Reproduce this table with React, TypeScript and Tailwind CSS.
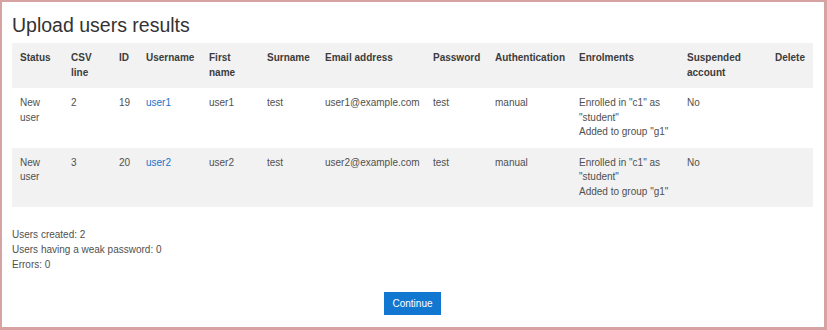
const columns = [
  { label: "Status", width: "w-[51px]" },
  { label: "CSV line", width: "w-[48px]" },
  { label: "ID", width: "w-[27px]" },
  { label: "Username", width: "w-[63px]" },
  { label: "First name", width: "w-[58px]" },
  { label: "Surname", width: "w-[58px]" },
  { label: "Email address", width: "w-[108px]" },
  { label: "Password", width: "w-[62px]" },
  { label: "Authentication", width: "w-[84px]" },
  { label: "Enrolments", width: "w-[108px]" },
  { label: "Suspended account", width: "w-[88px]" },
  { label: "Delete", width: "w-[46px]" },
];

const rows = [
  { line: "2", id: "19", username: "user1", email: "user1@example.com" },
  { line: "3", id: "20", username: "user2", email: "user2@example.com" },
];

function Cell({ children }: { children?: React.ReactNode }) {
  return <td className="px-2 py-2 align-top">{children}</td>;
}

export default function App() {
  return (
    <div className="h-[330px] w-[827px] border-t-2 border-l-2 border-r-[3px] border-b-[3px] border-[#d6a2a2] bg-white pl-[10px] pr-[11px] pt-[11px] font-['Liberation_Sans',Arial,sans-serif] text-[10px] leading-[14.5px] text-[#505050]">
      <h2 className="text-[19.5px] leading-[24px] font-normal text-[#333]">Upload users results</h2>

      <table className="mt-[6px] w-[801px] table-fixed border-collapse text-left">
        <colgroup>
          {columns.map((c) => (
            <col key={c.label} className={c.width} />
          ))}
        </colgroup>
        <thead>
          <tr className="bg-[#f2f2f2]">
            {columns.map((c) => (
              <th key={c.label} className="px-2 py-2 align-top font-bold text-[#3c3c3c]">
                {c.label}
              </th>
            ))}
          </tr>
        </thead>
        <tbody>
          {rows.map((r, i) => (
            <tr key={r.id} className={i % 2 === 1 ? "bg-[#f2f2f2]" : "bg-white"}>
              <Cell>New user</Cell>
              <Cell>{r.line}</Cell>
              <Cell>{r.id}</Cell>
              <Cell>
                <a href="#" className="text-[#1a74c9]">
                  {r.username}
                </a>
              </Cell>
              <Cell>{r.username}</Cell>
              <Cell>test</Cell>
              <Cell>{r.email}</Cell>
              <Cell>test</Cell>
              <Cell>manual</Cell>
              <Cell>
                <div className="whitespace-nowrap">Enrolled in "c1" as</div>
                <div className="whitespace-nowrap">"student"</div>
                <div className="whitespace-nowrap">Added to group "g1"</div>
              </Cell>
              <Cell>No</Cell>
              <Cell />
            </tr>
          ))}
        </tbody>
      </table>

      <div className="mt-[20px] leading-[15px]">
        <div>Users created: 2</div>
        <div>Users having a weak password: 0</div>
        <div>Errors: 0</div>
      </div>

      <div className="mt-[20px] flex justify-center">
        <button className="h-[23px] bg-[#1177d1] px-2 text-[10px] leading-[15px] text-white">Continue</button>
      </div>
    </div>
  );
}
